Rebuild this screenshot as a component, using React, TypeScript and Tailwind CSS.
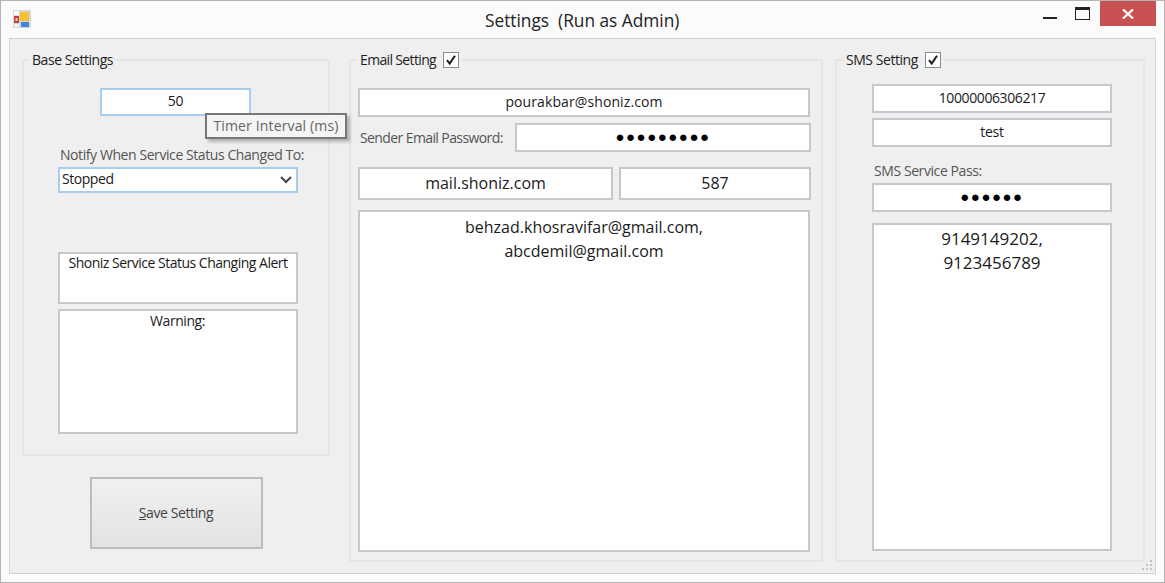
import React from "react";

const box = "bg-white border-2 border-[#c6c6cc] flex justify-center text-[#1a1a1a] shrink-0";

function Check() {
  return (
    <span className="w-[16px] h-[16px] border border-[#8a8a8a] bg-white flex items-center justify-center mt-[-1px]">
      <svg width="12" height="12" viewBox="0 0 12 12">
        <path d="M2 6.2 L4.7 9.6 L10 1.8" fill="none" stroke="#1a1a1a" strokeWidth="2" />
      </svg>
    </span>
  );
}

function Legend({ children, left, tight }: { children: React.ReactNode; left: string; tight?: boolean }) {
  return (
    <div className={`absolute -top-[10px] ${left} bg-[#efefef] px-[2px] flex items-center gap-[7px] text-[14px] leading-[18px] ${tight ? "tracking-[-0.65px]" : "tracking-[-0.45px]"} text-[#222]`}>
      {children}
    </div>
  );
}

export default function App() {
  return (
    <div className="w-[1165px] h-[583px] overflow-hidden bg-[#fbfbfb] border border-[#b4b4b4] flex flex-col font-['Open_Sans',sans-serif] text-[#222]">
      <div className="h-[37px] shrink-0 flex items-start relative">
        <svg className="ml-[12px] mt-[9px]" width="18" height="18" viewBox="0 0 18 18">
          <rect width="18" height="18" fill="#d8d8d8" />
          <rect x="1" y="1" width="5" height="4" fill="#fff" />
          <rect x="1" y="6" width="5" height="7" fill="#c9403a" />
          <rect x="2.5" y="8" width="2" height="3" fill="#f4d0c8" />
          <rect x="7" y="2" width="9" height="9" fill="#f2c32c" />
          <rect x="8" y="12" width="8" height="5" fill="#3f86d6" />
          <rect x="1" y="14" width="5" height="3" fill="#f2f2f2" />
        </svg>
        <div className="ml-[454px] w-[200px] pt-[8px] text-[17.3px] leading-[24px] whitespace-pre text-[#222]">Settings  (Run as Admin)</div>
        <div className="ml-auto flex items-start">
          <div className="w-[14px] h-[2px] bg-[#222] mt-[16px] mr-[18px]" />
          <div className="w-[15px] h-[13px] border border-[#222] border-t-[3px] mt-[6px] mr-[10px]" />
          <div className="w-[56px] h-[25px] bg-[#c75050] flex items-center justify-center mr-[8px]">
            <svg width="12" height="10" viewBox="0 0 12 10">
              <path d="M1 0.5 L11 9.5 M11 0.5 L1 9.5" stroke="#fff" strokeWidth="2.2" />
            </svg>
          </div>
        </div>
      </div>
      <div className="relative ml-[8px] w-[1147px] h-[536px] bg-[#efefef] border border-[#d3d3d3] pt-[20px] pl-[12px] flex items-start text-[14px]">
        {/* Left column */}
        <div className="w-[308px] flex flex-col shrink-0">
          <div className="relative h-[397px] border-2 border-[#e6e6e6] pl-[34px] flex flex-col">
            <Legend left="left-[6px]">Base Settings</Legend>
            <div className="relative ml-[42px] mt-[27px] w-[151px] h-[28px] bg-white border-2 border-[#a9cdf0] flex items-center justify-center pb-[3px] text-[14px] tracking-[-0.3px] text-[#1a1a1a]">
              50
              <div className="absolute left-[103px] top-[23px] w-[142px] h-[26px] z-10 bg-[#f4f4f4] border-2 border-[#777] shadow-[3px_3px_3px_rgba(0,0,0,0.25)] text-[14px] text-[#666] flex items-center justify-center tracking-[0.15px] pb-[1px] whitespace-nowrap">
                Timer Interval (ms)
              </div>
            </div>
            <div className="mt-[29px] pl-[2px] w-[247px] text-[14px] leading-[20px] tracking-[-0.42px] text-[#555] whitespace-nowrap">Notify When Service Status Changed To:</div>
            <div className="mt-[2px] w-[240px] h-[26px] bg-white border-2 border-[#a9cdf0] flex items-center justify-between pl-[2px] pr-[4px] pb-[3px] text-[14px] tracking-[-0.45px] text-[#1a1a1a]">
              Stopped
              <svg className="mt-[3px]" width="12" height="8" viewBox="0 0 12 8">
                <path d="M1 1 L6 6 L11 1" fill="none" stroke="#444" strokeWidth="2" />
              </svg>
            </div>
            <div className={`${box} mt-[59px] w-[240px] h-[52px] text-[14px] leading-[18px] tracking-[-0.5px]`}>Shoniz Service Status Changing Alert</div>
            <div className={`${box} mt-[5px] w-[240px] h-[125px] pt-[1px] pr-[1px] text-[14px] leading-[18px] tracking-[-0.45px]`}>Warning:</div>
          </div>
          <button className="ml-[68px] mt-[21px] w-[173px] h-[72px] border-2 border-[#bcbcbc] bg-gradient-to-b from-[#f0f0f0] to-[#e3e3e3] pb-[2px] pr-[1px] text-[14px] tracking-[-0.4px] text-[#444]">
            <span className="underline">S</span>ave Setting
          </button>
        </div>

        {/* Email */}
        <div className="relative ml-[19px] w-[474px] h-[503px] border-2 border-[#e6e6e6] pl-[7px] pt-[27px] flex flex-col shrink-0">
          <Legend left="left-[7px]" tight>Email Setting <Check /></Legend>
          <div className={`${box} w-[452px] h-[29px] items-center pb-[2px] text-[14px] tracking-[0.1px]`}>pourakbar@shoniz.com</div>
          <div className="mt-[6px] flex items-center h-[29px]">
            <div className="w-[157px] pl-[2px] pb-[1px] text-[14px] tracking-[-0.6px] text-[#555] whitespace-nowrap">Sender Email Password:</div>
            <div className={`${box} w-[296px] h-[29px] items-center pb-[2px] text-[15px] tracking-[1.5px] text-black`}>●●●●●●●●●</div>
          </div>
          <div className="mt-[15px] flex gap-[6px]">
            <div className={`${box} w-[255px] h-[33px] items-center pb-[2px] text-[16px]`}>mail.shoniz.com</div>
            <div className={`${box} w-[192px] h-[33px] items-center pb-[2px] text-[16px]`}>587</div>
          </div>
          <div className={`${box} mt-[10px] w-[452px] h-[342px] text-[16px] leading-[24px] pt-[3px] text-center`}>
            <div>behzad.khosravifar@gmail.com,<br />abcdemil@gmail.com</div>
          </div>
        </div>

        {/* SMS */}
        <div className="relative ml-[12px] w-[310px] h-[503px] border-2 border-[#e6e6e6] pl-[35px] pt-[23px] flex flex-col shrink-0">
          <Legend left="left-[7px]">SMS Setting <Check /></Legend>
          <div className={`${box} w-[240px] h-[29px] items-center pb-[2px] text-[14px] tracking-[-0.4px]`}>10000006306217</div>
          <div className={`${box} mt-[5px] w-[240px] h-[29px] items-center pb-[2px] text-[14px] tracking-[-0.3px]`}>test</div>
          <div className="mt-[14px] pl-[2px] text-[14px] leading-[20px] tracking-[-0.42px] text-[#555]">SMS Service Pass:</div>
          <div className={`${box} mt-[2px] w-[240px] h-[29px] items-center pb-[2px] text-[15px] tracking-[1.5px] text-black`}>●●●●●●</div>
          <div className={`${box} mt-[11px] w-[240px] h-[328px] text-[17px] leading-[24px] pt-[2px] text-center`}>
            <div>9149149202,<br />9123456789</div>
          </div>
        </div>

        <svg className="absolute right-[2px] bottom-[2px]" width="11" height="11" viewBox="0 0 11 11" fill="#c4c4c4">
          <rect x="8" y="0" width="2" height="2" />
          <rect x="4" y="4" width="2" height="2" />
          <rect x="8" y="4" width="2" height="2" />
          <rect x="0" y="8" width="2" height="2" />
          <rect x="4" y="8" width="2" height="2" />
          <rect x="8" y="8" width="2" height="2" />
        </svg>
      </div>
    </div>
  );
}
